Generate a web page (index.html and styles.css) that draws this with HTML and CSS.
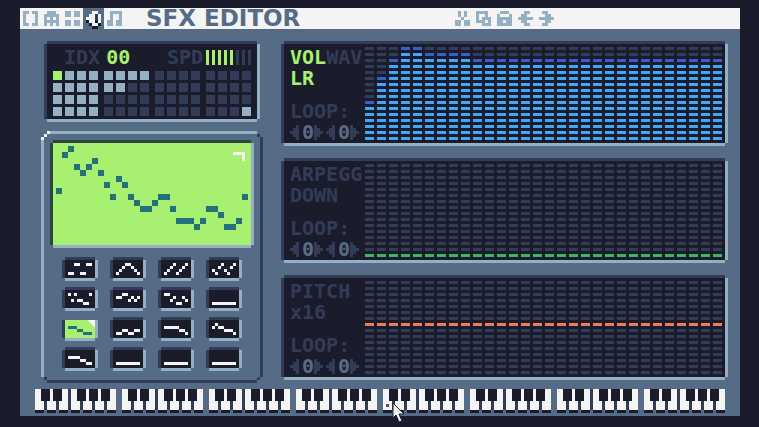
FILE: index.html
```html
<!DOCTYPE html>
<html lang="en">
<head>
  <meta charset="UTF-8" />
  <meta name="viewport" content="width=device-width, initial-scale=1.0"/>
  <title>SFX Editor</title>
  <link rel="stylesheet" href="styles.css">
</head>
<body>
  <div class="app">
    <header class="toolbar">
      <nav class="tabs" id="tabs"></nav>
      <h1 class="title">SFX EDITOR</h1>
      <div class="tools" id="tools"></div>
    </header>

    <main class="content">
      <div class="left">
        <section class="panel selector">
          <div class="selector-head">
            <span>IDX</span>
            <span class="index">00</span>
            <span class="speed-label">SPD</span>
            <div class="speed">
              <i class="on"></i><i class="on"></i><i class="on"></i><i class="on"></i><i class="on"></i><i></i><i></i><i></i>
            </div>
          </div>
          <div class="slots" id="slots"></div>
        </section>

        <section class="console">
          <div class="screen" id="screen"></div>
          <div class="waves" id="waves"></div>
        </section>
      </div>

      <div class="right">
        <section class="panel channel">
          <div class="controls">
            <div class="line"><button class="lit">VOL</button><button>WAV</button></div>
            <div class="line"><button class="lit">LR</button></div>
            <div class="line loop">LOOP:</div>
            <div class="line spinners"></div>
          </div>
          <div class="graph" id="volume"></div>
        </section>

        <section class="panel channel">
          <div class="controls">
            <div class="line"><button>ARPEGG</button></div>
            <div class="line"><button>DOWN</button></div>
            <div class="line loop">LOOP:</div>
            <div class="line spinners"></div>
          </div>
          <div class="graph" id="arpeggio"></div>
        </section>

        <section class="panel channel">
          <div class="controls">
            <div class="line"><button>PITCH</button></div>
            <div class="line"><button>x16</button></div>
            <div class="line loop">LOOP:</div>
            <div class="line spinners"></div>
          </div>
          <div class="graph" id="pitch"></div>
        </section>
      </div>
    </main>

    <div class="piano" id="piano"></div>
  </div>

  <svg class="cursor" width="13" height="21" viewBox="0 0 13 21">
    <path d="M1 1V16L4 13L7 20L10 19L7 12H12Z" fill="#f4f4f4" stroke="#1a1c2c" stroke-width="1"/>
  </svg>

  <script src="script.js"></script>
</body>
</html>
```
FILE: styles.css
```css
* {
  box-sizing: border-box;
}

body {
  margin: 0;
  padding: 8px 19px 11px 20px;
  background: #1a1c2c;
  font-family: 'DejaVu Sans Mono', monospace;
  font-size: 20px;
  font-weight: bold;
  line-height: 21px;
  color: #333c57;
}

button {
  border: none;
  padding: 0;
  margin: 0;
  background: none;
  font: inherit;
  color: inherit;
  cursor: pointer;
}

svg {
  display: block;
}

.app {
  background: #566c86;
  padding-bottom: 3px;
}

/* top bar */
.toolbar {
  display: flex;
  height: 21px;
  background: #f4f4f4;
}

.tabs,
.tools {
  display: flex;
}

.icon {
  width: 21px;
  height: 21px;
  padding: 3px;
  color: #94b0c2;
}

.icon.active {
  background: #566c86;
  color: #f4f4f4;
}

.icon.active svg {
  filter: drop-shadow(0 3px 0 #1a1c2c);
}

.title {
  flex: 0 0 306px;
  margin: 0 0 0 21px;
  font-family: 'DejaVu Sans', sans-serif;
  font-size: 23px;
  line-height: 21px;
  color: #566c86;
}

/* layout */
.content {
  display: grid;
  grid-template-columns: 222px 1fr;
  gap: 21px;
  padding: 15px 15px 0 21px;
}

.right {
  display: flex;
  flex-direction: column;
  gap: 18px;
}

.panel {
  background: #1a1c2c;
  box-shadow: 0 -3px #333c57, -3px 0 #333c57, 3px 0 #94b0c2, 0 3px #94b0c2;
}

/* sfx selector */
.selector {
  margin: 0 6px 12px;
  padding: 3px 6px;
}

.selector-head {
  display: flex;
  padding-left: 11px;
  margin-bottom: 3px;
}

.index {
  margin-left: 6px;
  color: #a7f070;
}

.speed-label {
  margin-left: auto;
}

.speed {
  display: flex;
  gap: 3px;
  padding: 3px 0 3px 3px;
}

.speed i {
  width: 3px;
  background: #333c57;
}

.speed i.on {
  background: #a7f070;
}

.slots {
  display: flex;
  justify-content: space-between;
}

.group {
  display: grid;
  grid-template-columns: repeat(4, 9px);
  gap: 3px;
}

.slot {
  height: 9px;
  background: #333c57;
}

.slot.used {
  background: #94b0c2;
}

.slot.current {
  background: #a7f070;
}

/* waveform console, bevelled edge with stepped corners */
.console {
  padding: 12px;
  background:
    linear-gradient(#f4f4f4, #f4f4f4) 6px 0 / 3px 3px,
    linear-gradient(#f4f4f4, #f4f4f4) 3px 3px / 3px 3px,
    linear-gradient(#f4f4f4, #f4f4f4) 0 6px / 3px 3px,
    linear-gradient(#333c57, #333c57) right 3px top 3px / 3px 3px,
    linear-gradient(#333c57, #333c57) right 3px bottom 3px / 3px 3px,
    linear-gradient(#333c57, #333c57) left 3px bottom 3px / 3px 3px,
    linear-gradient(#94b0c2, #94b0c2) 9px 0 / calc(100% - 15px) 3px,
    linear-gradient(#94b0c2, #94b0c2) 0 9px / 3px calc(100% - 15px),
    linear-gradient(#333c57, #333c57) 6px 100% / calc(100% - 12px) 3px,
    linear-gradient(#333c57, #333c57) 100% 6px / 3px calc(100% - 12px);
  background-repeat: no-repeat;
}

.screen {
  padding: 3px;
  background: #a7f070;
  box-shadow: 0 -3px #2b4542, -3px 0 #2b4542, 3px 0 #94b0c2, 0 3px #94b0c2;
}

.waves {
  display: grid;
  grid-template-columns: repeat(4, 30px);
  gap: 12px 18px;
  justify-content: center;
  margin: 15px 0 3px;
}

.wave {
  height: 18px;
  padding: 3px;
  color: #f4f4f4;
  background: #1a1c2c;
  box-shadow: 0 -3px #333c57, -3px 0 #333c57, 3px 0 #94b0c2, 0 3px #94b0c2;
}

.wave.selected {
  color: #257179;
  background: linear-gradient(225deg, #f4f4f4 5px, #a7f070 5px);
  box-shadow: -3px 0 #333c57, 3px 0 #94b0c2, 0 3px #94b0c2;
}

/* channels */
.channel {
  display: flex;
  padding: 3px 3px 0 6px;
}

.controls {
  flex: 0 0 75px;
}

.line {
  display: flex;
  height: 21px;
}

.lit {
  color: #a7f070;
}

.loop {
  margin-top: 12px;
}

.spinner {
  display: flex;
  width: 36px;
}

.spinner span {
  color: #566c86;
}

.spinner button {
  width: 12px;
  padding: 3px 3px 3px 0;
}

.graph {
  flex: 1;
}

/* piano */
.piano {
  display: flex;
  gap: 6px;
  padding: 6px 15px 0;
}

.octave {
  flex: 1;
  display: flex;
  gap: 3px;
  background: linear-gradient(#333c57 21px, #566c86 21px);
}

.key {
  position: relative;
  flex: 1;
  height: 24px;
  background: #f4f4f4;
  border-bottom: 3px solid #1a1c2c;
}

.key.sharp::after {
  content: '';
  position: absolute;
  z-index: 1;
  top: 0;
  right: -6px;
  width: 9px;
  height: 12px;
  background: #1a1c2c;
}

.key.hover::before {
  content: '';
  position: absolute;
  left: 3px;
  bottom: 3px;
  width: 3px;
  height: 3px;
  background: #5d4a5d;
}

.cursor {
  position: absolute;
  left: 392px;
  top: 402px;
  z-index: 2;
}
```
FILE: script.js
```js
const byId = (id) => document.getElementById(id);

// draws rows of '#' as square pixels, 'o' is a dark one
function bitmap(rows, size) {
  let rects = '';
  rows.forEach((row, y) => {
    [...row].forEach((c, x) => {
      if (c === '#') rects += `<rect x="${x}" y="${y}" width="1" height="1"/>`;
      if (c === 'o') rects += `<rect x="${x}" y="${y}" width="1" height="1" fill="#333c57"/>`;
    });
  });
  const w = rows[0].length, h = rows.length;
  return `<svg width="${w * size}" height="${h * size}" viewBox="0 0 ${w} ${h}" fill="currentColor" shape-rendering="crispEdges">${rects}</svg>`;
}

const tabs = {
  Code: ['##.##', '#...#', '#...#', '#...#', '##.##'],
  Sprites: ['.###.', '#####', '#.#.#', '#####', '#.#.#'],
  Map: ['##.##', '##.##', '.....', '##.##', '##.##'],
  SFX: ['..##.', '.##o#', '###o#', '.##.#', '..##.'],
  Music: ['.####', '.#..#', '.#..#', '##.##', '##.##']
};

const tools = {
  Cut: ['.#.#.', '.#.#.', '..#..', '##.##', '##.##'],
  Copy: ['####.', '#..#.', '#.###', '###.#', '..###'],
  Paste: ['.###.', '#...#', '#####', '##.##', '#####'],
  Undo: ['..##.', '.##..', '#####', '.##..', '..##.'],
  Redo: ['.##..', '..##.', '#####', '..##.', '.##..']
};

function icons(set, active) {
  return Object.keys(set).map((name) =>
    `<button class="icon${name === active ? ' active' : ''}" aria-label="${name}">${bitmap(set[name], 3)}</button>`
  ).join('');
}

byId('tabs').innerHTML = icons(tabs, 'SFX');
byId('tools').innerHTML = icons(tools);

// sfx slots, four groups of 4x4
const used = [
  ['####', '####', '####', '####'],
  ['####', '##..', '....', '....'],
  ['....', '....', '....', '....'],
  ['....', '....', '....', '...#']
];

byId('slots').innerHTML = used.map((group, g) =>
  '<div class="group">' + [...group.join('')].map((c, i) => {
    const state = g === 0 && i === 0 ? ' current' : c === '#' ? ' used' : '';
    return `<button class="slot${state}" aria-label="Slot"></button>`;
  }).join('') + '</div>'
).join('');

// big waveform
const wave = [7, 1, 0, 3, 4, 3, 2, 4, 6, 8, 5, 6, 8, 9, 10, 10,
  9, 8, 8, 10, 12, 12, 12, 13, 12, 10, 10, 11, 13, 13, 12, 8];

byId('screen').innerHTML =
  '<svg width="100%" viewBox="0 0 192 96" shape-rendering="crispEdges"><g fill="#257179">' +
  wave.map((v, i) => `<rect x="${i * 6}" y="${v * 6}" width="6" height="6"/>`).join('') +
  '</g><path d="M177 6h12v9h-3v-6h-9z" fill="#f4f4f4"/></svg>';

// waveform presets, one row index per column
const presets = [
  '33003300', '32100123', '32103210', '23102310',
  '02022330', '11002121', '00213312', '33333333',
  '11122333', '33223322', '11111223', '10112223',
  '11112233', '33333333', '33333333', '33333333'
];

byId('waves').innerHTML = presets.map((p, n) => {
  const rows = [0, 1, 2, 3].map((r) => [...p].map((v) => (+v === r ? '#' : '.')).join(''));
  return `<button class="wave${n === 8 ? ' selected' : ''}" aria-label="Wave ${n}">${bitmap(rows, 3)}</button>`;
}).join('');

// channel graphs, 30 columns by 16 rows
function graph(id, color) {
  let rects = '';
  for (let x = 0; x < 30; x++) {
    for (let y = 0; y < 16; y++) {
      rects += `<rect x="${x * 12}" y="${y * 6}" width="9" height="3" fill="${color(x, y)}"/>`;
    }
  }
  byId(id).innerHTML = `<svg width="100%" height="93" viewBox="0 0 357 93" preserveAspectRatio="none" shape-rendering="crispEdges">${rects}</svg>`;
}

const volume = [9, 5, 2, 0, 0, 1, 1, 1, 1];

graph('volume', (x, y) => {
  const top = x < volume.length ? volume[x] : 2;
  return y < top ? '#333c57' : y === top ? '#3b5dc9' : '#41a6f6';
});
graph('arpeggio', (x, y) => (y === 15 ? '#38b764' : '#333c57'));
graph('pitch', (x, y) => (y === 7 ? '#ef7d57' : '#333c57'));

// loop spinners
const left = bitmap(['..#', '.##', '###', '.##', '..#'], 3);
const right = bitmap(['#..', '##.', '###', '##.', '#..'], 3);
const spinner = `<div class="spinner"><button aria-label="Less">${left}</button><span>0</span><button aria-label="More">${right}</button></div>`;

document.querySelectorAll('.spinners').forEach((el) => {
  el.innerHTML = spinner + spinner;
});

// piano keys, eight octaves
const sharps = [0, 1, 3, 4, 5];
let keys = '';
for (let o = 0; o < 8; o++) {
  keys += '<div class="octave">';
  for (let k = 0; k < 7; k++) {
    keys += `<button class="key${sharps.includes(k) ? ' sharp' : ''}${o === 4 && k === 0 ? ' hover' : ''}" aria-label="Key"></button>`;
  }
  keys += '</div>';
}
byId('piano').innerHTML = keys;
```
